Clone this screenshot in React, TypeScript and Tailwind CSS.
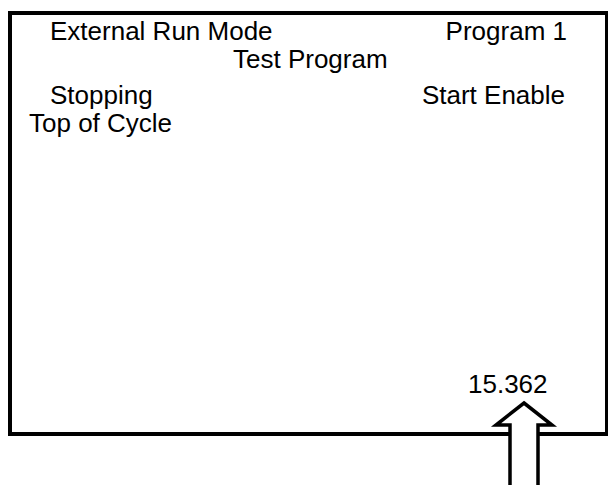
export default function App() {
  return (
    <div
      className="relative w-[608px] h-[485px] bg-white overflow-hidden pt-[11px] pl-[8px] text-black text-[26px] leading-[28px]"
      style={{ fontFamily: '"Liberation Sans", Arial, sans-serif' }}
    >
      <div className="w-[600px] h-[425px] border-l-4 border-t-4 border-b-4 border-r-[3px] border-black flex flex-col">
        <div className="mt-[2px] flex justify-between pl-[38px] pr-[38px]">
          <span>External Run Mode</span>
          <span>Program 1</span>
        </div>
        <div className="pl-[221px]">Test Program</div>
        <div className="mt-[8px] flex justify-between pl-[38px] pr-[40px]">
          <span>Stopping</span>
          <span>Start Enable</span>
        </div>
        <div className="pl-[17px]">Top of Cycle</div>
        <div className="flex-1" />
        <div className="pl-[456px] mb-[34px]">15.362</div>
      </div>
      <svg
        className="absolute left-0 top-0 w-[608px] h-[485px] pointer-events-none"
        width="608"
        height="485"
        viewBox="0 0 608 485"
      >
        <polygon
          points="524,403 552,425 538,425 538,495 510,495 510,425 496,425"
          fill="white"
          stroke="black"
          strokeWidth="3.5"
          strokeLinejoin="miter"
        />
      </svg>
    </div>
  );
}
